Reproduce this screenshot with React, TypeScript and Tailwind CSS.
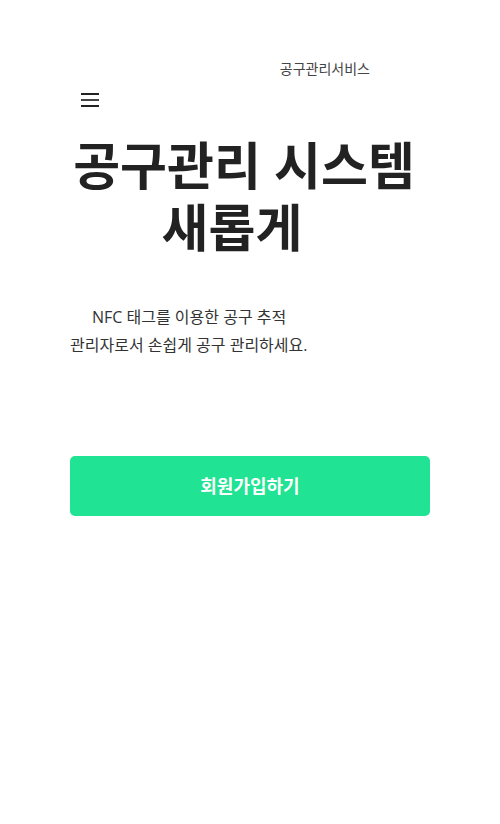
export default function App() {
  return (
    <div
      className="min-h-[824px] w-full bg-white text-[#222]"
      style={{ fontFamily: '"Open Sans", "Noto Sans CJK KR", sans-serif' }}
    >
      <div className="mx-[70px] pt-[59px]">
        <header>
          <div className="flex justify-end pr-[60px]">
            <span className="text-[14px] leading-[20px] text-[#444]">공구관리서비스</span>
          </div>
          <button className="mt-[12px] ml-[11px] flex h-[18px] w-[18px] flex-col justify-between py-[2px]">
            <span className="block h-[2px] w-full bg-[#222]" />
            <span className="block h-[2px] w-full bg-[#444]" />
            <span className="block h-[2px] w-full bg-[#222]" />
          </button>
        </header>

        <h1 className="mt-[25px] pr-[12px] text-center text-[51px] font-bold leading-[62px] text-[#222]">
          <span className="block">공구관리 시스템</span>
          <span className="block pr-[24px]">새롭게</span>
        </h1>

        <p className="mt-[45px] indent-[22px] text-[16px] leading-[28px] text-[#333]">
          NFC 태그를 이용한 공구 추적
          <br />
          관리자로서 손쉽게 공구 관리하세요.
        </p>

        <button className="mt-[97px] flex h-[60px] w-full items-center justify-center rounded-[5px] bg-[#20e393] text-[18px] font-bold text-white">
          회원가입하기
        </button>
      </div>
    </div>
  )
}
